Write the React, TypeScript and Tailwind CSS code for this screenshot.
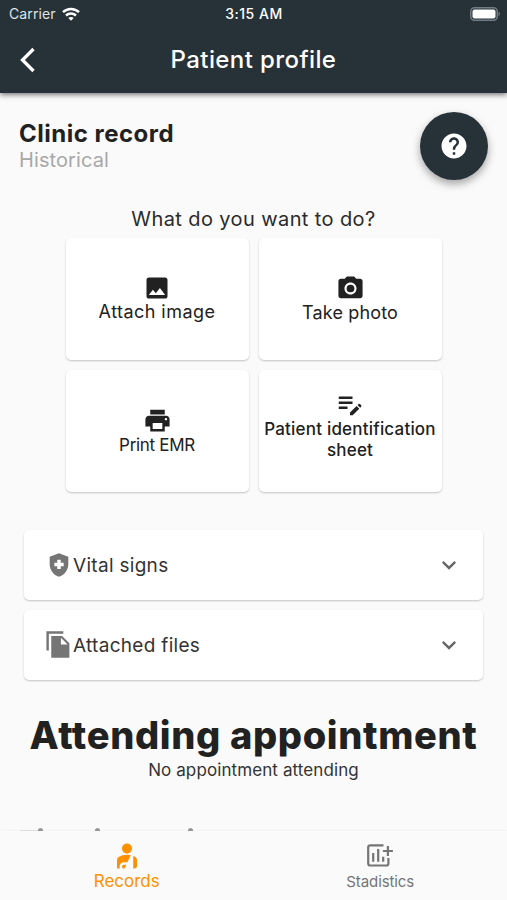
import type { ReactNode } from 'react';
import {
  MdCameraAlt,
  MdEditNote,
  MdExpandMore,
  MdHealthAndSafety,
  MdHelp,
  MdImage,
  MdPersonalInjury,
  MdPrint,
} from 'react-icons/md';

const cardShadow = 'shadow-[0_1px_2px_rgba(0,0,0,0.22)]';

function StatusBar() {
  return (
    <div className="grid h-[27px] grid-cols-3 items-center pl-[9px] pr-[8px] text-[14px]">
      <div className="flex items-center gap-[6px] text-[#dfe4e6]">
        <span className="tracking-[0.1px]">Carrier</span>
        <svg width="18" height="14" viewBox="0 0 18 14" fill="none" stroke="#fff" strokeWidth="2.5">
          <path d="M1 5.2C5.5 .8 12.5 .8 17 5.2" />
          <path d="M4 8.5c2.8-2.7 7.2-2.7 10 0" />
          <path d="M9 13.8 6.3 11c1.5-1.5 3.9-1.5 5.4 0z" fill="#fff" stroke="none" />
        </svg>
      </div>
      <span className="text-center font-medium tracking-[0.5px]">3:15 AM</span>
      <div className="-mr-[2px] flex justify-end">
        <svg width="31" height="14" viewBox="0 0 31 14">
          <rect x=".75" y=".75" width="26.5" height="12.5" rx="3.8" fill="none" stroke="#737c80" strokeWidth="1.5" />
          <rect x="2.5" y="2.5" width="23" height="9" rx="2" fill="#fff" />
          <path d="M28.5 4.8c1.8.6 1.8 3.8 0 4.4z" fill="#737c80" />
        </svg>
      </div>
    </div>
  );
}

function Header() {
  return (
    <header className="relative z-10 h-[93px] shrink-0 bg-[#263238] text-white shadow-[0_2px_5px_rgba(0,0,0,0.5)]">
      <StatusBar />
      <div className="grid h-[66px] grid-cols-[60px_1fr_60px] items-center">
        <svg className="ml-[20px]" width="16" height="26" viewBox="0 0 16 26" fill="none" stroke="#fff" strokeWidth="3.3">
          <path d="M13.5 2 2.5 13l11 11" />
        </svg>
        <h1 className="text-center text-[24px] font-medium tracking-[0.4px]">Patient profile</h1>
      </div>
    </header>
  );
}

interface ActionProps {
  icon: ReactNode;
  children: ReactNode;
  className: string;
}

function ActionCard({ icon, children, className }: ActionProps) {
  return (
    <button className={`flex h-[122px] flex-col items-center justify-center rounded-[5px] bg-white ${cardShadow} ${className}`}>
      {icon}
      <span>{children}</span>
    </button>
  );
}

interface PanelProps {
  icon: ReactNode;
  title: string;
}

function Panel({ icon, title }: PanelProps) {
  return (
    <div className={`flex h-[70px] items-center rounded-[5px] bg-white pb-px pl-[20px] pr-[20px] ${cardShadow}`}>
      <div className="flex w-[29px] justify-center text-[#757575]">{icon}</div>
      <span className="flex-1 pt-[3px] text-[19px] tracking-[0.3px] text-[#333]">{title}</span>
      <MdExpandMore size={28} className="text-[#666]" />
    </div>
  );
}

function FileCopyIcon() {
  return (
    <svg width="29" height="29" viewBox="0 0 24 24" fill="currentColor">
      <path d="M16 1H2v16h2V3h12V1zm-1 4 6 6v12H6V5h9zm-1 7h5.5L14 6.5V12z" />
    </svg>
  );
}

function AddChartIcon() {
  return (
    <svg width="26" height="23" viewBox="0 0 26 23" fill="none" stroke="currentColor" strokeWidth="2.2">
      <path d="M16.5 1.3H3.2a2 2 0 0 0-2 2v16.2a2 2 0 0 0 2 2h16.2a2 2 0 0 0 2-2V14" />
      <path d="M6.2 9v8.7M11.2 5v12.700M16.200 12.700v5" />
      <path d="M20.900 2v10M15.900 7h10" />
    </svg>
  );
}

export default function App() {
  return (
    <div className="flex h-[900px] w-[507px] flex-col overflow-hidden bg-[#fafafa] font-['Inter',sans-serif] text-[#212121]">
      <Header />
      <main className="flex h-[738px] flex-col overflow-hidden">
        <section className="flex h-[112px] justify-between pl-[19px] pr-[19px]">
          <div className="pt-[26px]">
            <h2 className="text-[24px] leading-[30px] font-bold tracking-[0.5px]">Clinic record</h2>
            <p className="text-[20px] leading-[22px] tracking-[0.1px] text-[#a8a8a8]">Historical</p>
          </div>
          <button className="mt-[19px] flex size-[68px] items-center justify-center rounded-full bg-[#263238] text-white shadow-[0_4px_8px_rgba(0,0,0,0.35)]">
            <MdHelp size={30} />
          </button>
        </section>

        <section>
          <p className="h-[33px] text-center text-[20px] leading-[28px] tracking-[0.4px] text-[#2b2b2b]">
            What do you want to do?
          </p>
          <div className="grid grid-cols-[183px_183px] justify-center gap-[10px]">
            <ActionCard icon={<MdImage size={28} />} className="pb-[2px] text-[18px] leading-[20px] tracking-[0.45px]">
              Attach image
            </ActionCard>
            <ActionCard icon={<MdCameraAlt size={29} />} className="pb-[1px] text-[18px] leading-[20px] tracking-[0.15px]">
              Take photo
            </ActionCard>
            <ActionCard icon={<MdPrint size={29} />} className="pb-[1px] text-[17px] leading-[20px] tracking-[-0.3px]">
              Print EMR
            </ActionCard>
            <ActionCard
              icon={<MdEditNote size={30} />}
              className="pb-[12px] text-[17px] leading-[21px] font-medium tracking-[0.2px]"
            >
              Patient identification sheet
            </ActionCard>
          </div>
        </section>

        <section className="mx-[24px] mt-[38px] flex flex-col gap-[10px]">
          <Panel icon={<MdHealthAndSafety size={28} />} title="Vital signs" />
          <Panel icon={<FileCopyIcon />} title="Attached files" />
        </section>

        <section className="mt-[31px] text-center">
          <h2 className="text-[38px] leading-[48px] font-extrabold tracking-[0.65px] whitespace-nowrap">
            Attending appointment
          </h2>
          <p className="text-[17px] leading-[22px] tracking-[0.1px] text-[#333]">No appointment attending</p>
        </section>

        {/* top edge of the next heading, cut off by the tab bar */}
        <div className="mt-auto flex h-[3px] shrink-0 overflow-hidden pl-[20px]">
          <span className="mt-[2px] h-[2px] w-[18px] bg-[#e4e4e4]" />
          <span className="size-[5px] rounded-full bg-[#999]" />
          <span className="ml-[52px] size-[5px] rounded-full bg-[#999]" />
          <span className="ml-[88px] size-[5px] rounded-full bg-[#999]" />
        </div>
      </main>

      <nav className="grid h-[69px] grid-cols-2 shadow-[0_-1px_2px_rgba(0,0,0,0.03)]">
        <a className="flex flex-col items-center pt-[10px] text-[#ff9100]">
          <MdPersonalInjury size={30} />
          <span className="text-[17px] leading-[20px]">Records</span>
        </a>
        <a className="flex flex-col items-center pt-[13px] text-[#757575]">
          <AddChartIcon />
          <span className="mt-[4px] text-[15px] leading-[22px] tracking-[-0.1px]">Stadistics</span>
        </a>
      </nav>
    </div>
  );
}
